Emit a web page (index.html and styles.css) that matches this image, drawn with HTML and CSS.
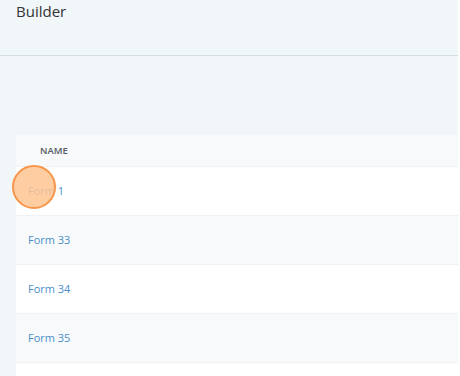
FILE: index.html
```html
<!DOCTYPE html>
<html lang="en">
<head>
    <meta charset="UTF-8">
    <meta name="viewport" content="width=device-width, initial-scale=1.0">
    <title>Builder</title>
    <link rel="stylesheet" href="styles.css">
</head>
<body>
    <div class="page">
        <header class="topbar">
            <h1>Builder</h1>
        </header>
        <main class="content">
            <table class="forms">
                <thead>
                    <tr><th>Name</th></tr>
                </thead>
                <tbody>
                    <tr><td><a href="#">Form 1</a><span class="touch"></span></td></tr>
                    <tr><td><a href="#">Form 33</a></td></tr>
                    <tr><td><a href="#">Form 34</a></td></tr>
                    <tr><td><a href="#">Form 35</a></td></tr>
                    <tr><td></td></tr>
                </tbody>
            </table>
        </main>
    </div>
</body>
</html>
```

FILE: styles.css
```css
html, body {
    margin: 0;
    padding: 0;
    background: #ffffff;
    font-family: "Open Sans", "Noto Sans", sans-serif;
}
.page {
    width: 458px;
    height: 376px;
    overflow: hidden;
    background: #f1f6f9;
}
.topbar {
    height: 56px;
    border-bottom: 1px solid #d5dde3;
    box-sizing: border-box;
    padding: 0 16px;
}
.topbar h1 {
    margin: 0;
    padding-top: 1px;
    font-size: 15px;
    font-weight: 400;
    color: #333;
    line-height: 20px;
}
.content {
    padding: 79px 0 0 16px;
}
.forms {
    width: 100%;
    border-collapse: collapse;
}
.forms th {
    height: 31px;
    padding: 0 0 0 24px;
    background: #f7f9fb;
    text-align: left;
    text-transform: uppercase;
    font-size: 9.5px;
    font-weight: 600;
    color: #555b62;
    border-bottom: 1px solid #eef2f5;
    box-sizing: border-box;
}
.forms td {
    position: relative;
    height: 49px;
    padding: 0 0 0 12px;
    font-size: 11px;
    border-bottom: 1px solid #eef2f5;
    box-sizing: border-box;
    background: #ffffff;
}
.forms tbody tr:nth-child(even) td {
    background: #f7f9fb;
}
.forms a {
    color: #4a8fc7;
    text-decoration: none;
}
.touch {
    position: absolute;
    left: -4px;
    top: -2px;
    width: 40px;
    height: 40px;
    border-radius: 50%;
    background: rgba(254, 196, 146, 0.85);
    border: 2px solid #f7954a;
}
```
